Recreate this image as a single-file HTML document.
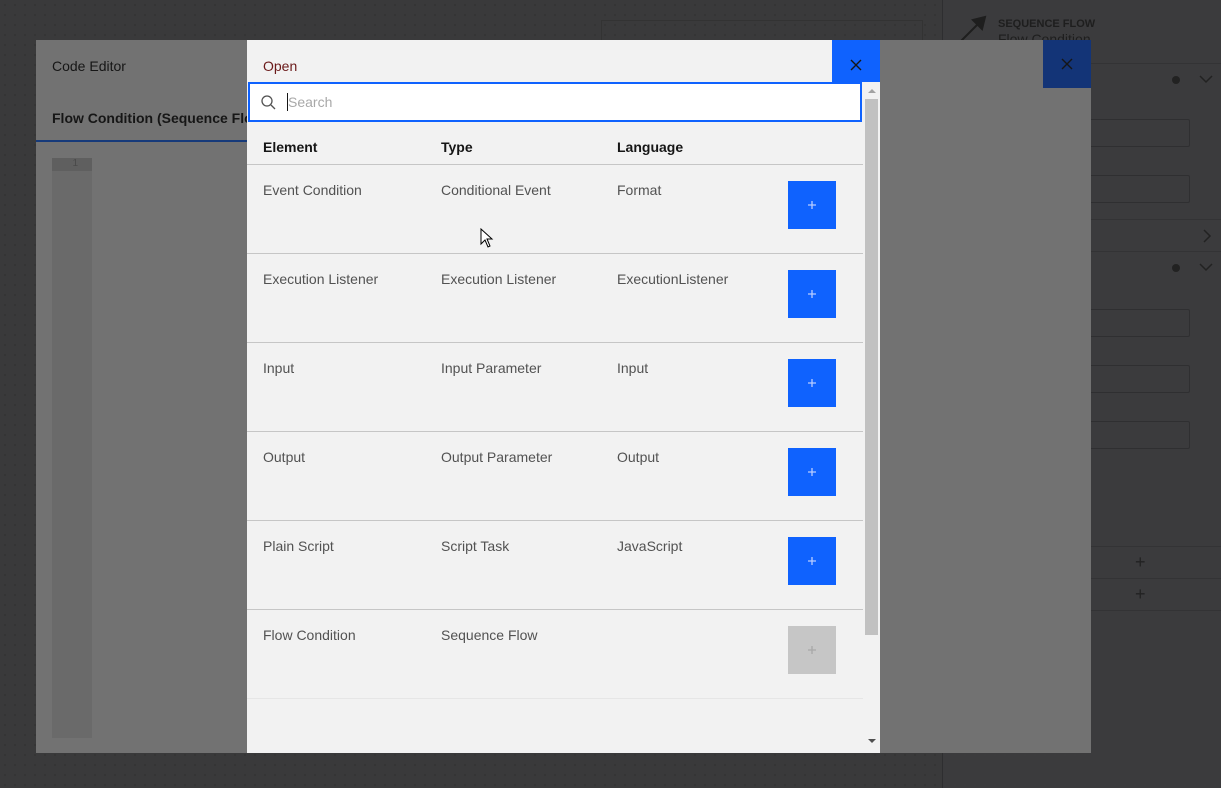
<!DOCTYPE html>
<html><head><style>
*{margin:0;padding:0;box-sizing:border-box}
body{width:1221px;height:788px;overflow:hidden;background:#3a3a3b;font-family:"Liberation Sans",sans-serif;position:relative}
.abs{position:absolute}
.canvas{left:0;top:0;width:942px;height:788px;background-color:#3a3a3b;background-image:radial-gradient(#333 1px,transparent 1px);background-size:10px 10px}
.panel{left:942px;top:0;width:279px;height:788px;background:#3b3b3d;border-left:1px solid #2e2e30}
.line{position:absolute;left:0;right:0;height:1px;background:#333335}
.field{position:absolute;left:1040px;width:150px;border:1px solid #2f2f31;border-radius:2px}
.ce{left:36px;top:40px;width:1055px;height:713px;background:#727272}
.open{left:247px;top:40px;width:633px;height:713px;background:#f2f2f2}
.row{position:absolute;left:0;width:616px;height:89px;border-bottom:1px solid #c6c6c6;font-size:14px;color:#525252}
.row span{position:absolute;top:17px}
.btn{position:absolute;left:541px;top:16px;width:48px;height:48px;background:#0f62fe}
.btn svg{position:absolute;left:19px;top:19px}
</style></head><body>
<div class="abs canvas"></div>
<div class="abs" style="left:601px;top:20px;width:322px;height:60px;border:1px solid #333"></div>
<div class="abs panel">
 <div class="line" style="top:63px"></div>
 <div class="line" style="top:219px"></div>
 <div class="line" style="top:251px"></div>
 <div class="line" style="top:546px"></div>
 <div class="line" style="top:578px"></div>
 <div class="line" style="top:610px"></div>
 <div class="abs" style="left:55px;top:18px;font-size:11px;font-weight:bold;color:#1e1e1e">SEQUENCE FLOW</div>
 <div class="abs" style="left:55px;top:31px;font-size:14px;color:#1e1e1e">Flow Condition</div>
 <div class="abs" style="left:229px;top:76px;width:8px;height:8px;border-radius:50%;background:#222"></div>
 <div class="abs" style="left:229px;top:264px;width:8px;height:8px;border-radius:50%;background:#222"></div>
 <svg class="abs" style="left:256px;top:74px" width="14" height="10"><path d="M1 2 L7 8 L13 2" fill="none" stroke="#222" stroke-width="1.5"/></svg>
 <svg class="abs" style="left:256px;top:262px" width="14" height="10"><path d="M1 2 L7 8 L13 2" fill="none" stroke="#222" stroke-width="1.5"/></svg>
 <svg class="abs" style="left:259px;top:229px" width="10" height="14"><path d="M2 1 L8 7 L2 13" fill="none" stroke="#222" stroke-width="1.5"/></svg>
 <div class="abs" style="left:192px;top:552px;color:#222;font-size:18px">+</div>
 <div class="abs" style="left:192px;top:584px;color:#222;font-size:18px">+</div>
</div>
<svg class="abs" style="left:955px;top:14px" width="40" height="30"><path d="M5 28 L28 5 M18 6 L30 3 L27 15 Z" stroke="#1e1e1e" stroke-width="2" fill="#1e1e1e"/></svg>
<div class="field" style="top:119px;height:28px"></div>
<div class="field" style="top:175px;height:28px"></div>
<div class="field" style="top:309px;height:28px"></div>
<div class="field" style="top:365px;height:28px"></div>
<div class="field" style="top:421px;height:28px"></div>

<div class="abs ce">
 <div class="abs" style="left:16px;top:18px;font-size:14px;color:#161616">Code Editor</div>
 <div class="abs" style="left:16px;top:70px;font-size:14px;font-weight:bold;color:#161616">Flow Condition (Sequence Flow)</div>
 <div class="abs" style="left:0;top:100px;width:300px;height:2px;background:#163a7a"></div>
 <div class="abs" style="left:16px;top:118px;width:40px;height:580px;background:#6a6a6a"></div>
 <div class="abs" style="left:16px;top:118px;width:40px;height:13px;background:#5f5f5f;font-size:10px;color:#4a4a4a;text-align:right;padding-right:14px">1</div>
 <div class="abs" style="left:1007px;top:0;width:48px;height:48px;background:#133477">
  <svg class="abs" style="left:18px;top:18px" width="12" height="12"><path d="M1 1 L11 11 M11 1 L1 11" stroke="#161616" stroke-width="1.4"/></svg>
 </div>
</div>

<div class="abs open">
 <div class="abs" style="left:16px;top:18px;font-size:14px;color:#6b1a1a">Open</div>
 <div class="abs" style="left:585px;top:0;width:48px;height:42px;background:#0f62fe">
  <svg class="abs" style="left:18px;top:19px" width="12" height="12"><path d="M1 1 L11 11 M11 1 L1 11" stroke="#161616" stroke-width="1.4"/></svg>
 </div>
 <div class="abs" style="left:1px;top:42px;width:614px;height:40px;background:#fff;border:2px solid #0f62fe">
  <svg class="abs" style="left:10px;top:10px" width="18" height="18"><circle cx="7" cy="7" r="5" fill="none" stroke="#525252" stroke-width="1.3"/><path d="M11 11 L15 15" stroke="#525252" stroke-width="1.3"/></svg>
  <div class="abs" style="left:37px;top:9px;width:1px;height:18px;background:#161616"></div>
  <div class="abs" style="left:38px;top:10px;font-size:14px;color:#a8a8a8">Search</div>
 </div>
 <div class="abs" style="left:617px;top:42px;width:16px;height:671px;background:#f2f2f2">
  <div class="abs" style="left:1px;top:17px;width:13px;height:536px;background:#c1c1c1"></div>
  <div class="abs" style="left:4px;top:7px;border:4px solid transparent;border-bottom:4px solid #a3a3a3;border-top:0"></div>
  <div class="abs" style="left:4px;top:657px;border:4px solid transparent;border-top:4px solid #505050;border-bottom:0"></div>
 </div>
 <div class="abs" style="left:0;top:82px;width:616px;height:43px;border-bottom:1px solid #c6c6c6;font-size:14px;font-weight:bold;color:#161616">
  <span class="abs" style="left:16px;top:17px">Element</span><span class="abs" style="left:194px;top:17px">Type</span><span class="abs" style="left:370px;top:17px">Language</span>
 </div>
 <div class="row" style="top:125px"><span style="left:16px">Event Condition</span><span style="left:194px">Conditional Event</span><span style="left:370px">Format</span><div class="btn"><svg width="10" height="10"><path d="M5 1 V9 M1 5 H9" stroke="#b8ccff" stroke-width="1.3"/></svg></div></div>
 <div class="row" style="top:214px"><span style="left:16px">Execution Listener</span><span style="left:194px">Execution Listener</span><span style="left:370px">ExecutionListener</span><div class="btn"><svg width="10" height="10"><path d="M5 1 V9 M1 5 H9" stroke="#b8ccff" stroke-width="1.3"/></svg></div></div>
 <div class="row" style="top:303px"><span style="left:16px">Input</span><span style="left:194px">Input Parameter</span><span style="left:370px">Input</span><div class="btn"><svg width="10" height="10"><path d="M5 1 V9 M1 5 H9" stroke="#b8ccff" stroke-width="1.3"/></svg></div></div>
 <div class="row" style="top:392px"><span style="left:16px">Output</span><span style="left:194px">Output Parameter</span><span style="left:370px">Output</span><div class="btn"><svg width="10" height="10"><path d="M5 1 V9 M1 5 H9" stroke="#b8ccff" stroke-width="1.3"/></svg></div></div>
 <div class="row" style="top:481px"><span style="left:16px">Plain Script</span><span style="left:194px">Script Task</span><span style="left:370px">JavaScript</span><div class="btn"><svg width="10" height="10"><path d="M5 1 V9 M1 5 H9" stroke="#b8ccff" stroke-width="1.3"/></svg></div></div>
 <div class="row" style="top:570px;border-bottom-color:#e6e6e6"><span style="left:16px">Flow Condition</span><span style="left:194px">Sequence Flow</span><div class="btn" style="background:#c6c6c6"><svg width="10" height="10"><path d="M5 1 V9 M1 5 H9" stroke="#a8a8a8" stroke-width="1.3"/></svg></div></div>
</div>
<svg class="abs" style="left:480px;top:228px" width="14" height="20"><path d="M1 1 L1 16 L5 12 L8 19 L10 18 L7 11 L12 11 Z" fill="#fff" stroke="#000" stroke-width="1"/></svg>
</body></html>
